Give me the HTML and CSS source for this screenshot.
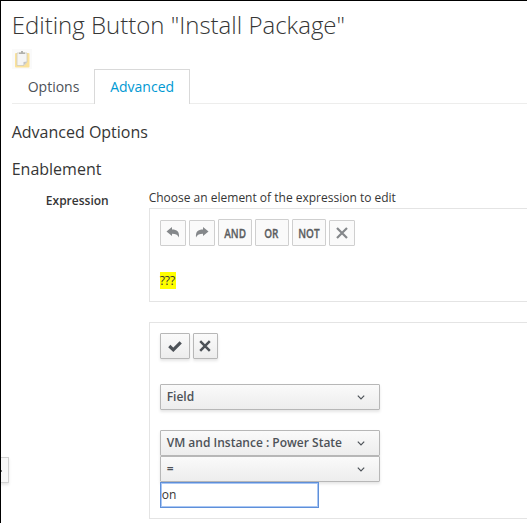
FILE: index.html
```
<!DOCTYPE html>
<html lang="en">
<head>
<meta charset="utf-8">
<title>Editing Button</title>
<link rel="stylesheet" href="styles.css">
</head>
<body>
<main class="page">
  <h1 class="title">Editing Button "Install Package"</h1>
  <div class="clipboard">
    <svg width="20" height="20" viewBox="0 0 20 20">
      <rect width="20" height="20" fill="#fafafa"/>
      <rect x="3" y="4" width="14.500" height="14.500" rx="1" fill="#fbe29a"/>
      <path d="M5 4h10v9l-3 3.500H5z" fill="#f5f5f5" stroke="#cfcbbd" stroke-width=".8"/>
      <path d="M15 12.500l-3.500 4v-3.500z" fill="#c4c4c4"/>
      <path d="M7 5V3.500h2V2h2v1.500h2V5z" fill="#b0b0ac"/>
    </svg>
  </div>
  <nav class="tabs">
    <a class="tab">Options</a>
    <a class="tab active">Advanced</a>
  </nav>
  <h2 class="heading first">Advanced Options</h2>
  <h2 class="heading">Enablement</h2>
  <section class="form-row">
    <div class="label">Expression</div>
    <div class="field">
      <p class="hint">Choose an element of the expression to edit</p>
      <div class="panel expression">
        <div class="toolbar">
          <button class="tool square"><svg width="14" height="12" viewBox="0 0 14 12"><path d="M.5 4.500L6 0v2.500c5 0 7.500 2 7 8C11.800 7.500 9.500 6.700 6 6.700V9z" fill="#85888b"/></svg></button>
          <button class="tool square"><svg width="14" height="12" viewBox="0 0 14 12"><path d="M13.500 4.500L8 0v2.500C3 2.500.5 4.500 1 10.500 2.200 7.500 4.500 6.700 8 6.700V9z" fill="#85888b"/></svg></button>
          <button class="tool"><span>AND</span></button>
          <button class="tool"><span>OR</span></button>
          <button class="tool"><span>NOT</span></button>
          <button class="tool square"><svg width="12" height="12" viewBox="0 0 12 12"><path d="M1 1l10 10M11 1L1 11" stroke="#85888b" stroke-width="2.200"/></svg></button>
        </div>
        <span class="token">???</span>
      </div>
      <div class="panel editor">
        <div class="actions">
          <button class="btn commit"><svg width="14" height="12" viewBox="0 0 14 12"><path d="M1.300 6l4 3.800L12.700 2.300" fill="none" stroke="#4d5258" stroke-width="3.200"/></svg></button>
          <button class="btn discard"><svg width="12" height="12" viewBox="0 0 12 12"><path d="M1.200 1.200l9.600 9.600M10.800 1.200L1.200 10.800" stroke="#4d5258" stroke-width="2.500"/></svg></button>
        </div>
        <button class="btn select kind">Field<svg class="chevron" width="8" height="5" viewBox="0 0 8 5"><path d="M.8.7L4 3.900 7.200.7" fill="none" stroke="#4d5258" stroke-width="1.200"/></svg></button>
        <button class="btn select">VM and Instance : Power State<svg class="chevron" width="8" height="5" viewBox="0 0 8 5"><path d="M.8.7L4 3.900 7.200.7" fill="none" stroke="#4d5258" stroke-width="1.200"/></svg></button>
        <button class="btn select">=<svg class="chevron" width="8" height="5" viewBox="0 0 8 5"><path d="M.8.7L4 3.900 7.200.7" fill="none" stroke="#4d5258" stroke-width="1.200"/></svg></button>
        <input class="value" type="text" value="on">
      </div>
    </div>
  </section>
  <div class="handle"><i></i></div>
</main>
</body>
</html>
```

FILE: styles.css
```
* { box-sizing: border-box; }
body {
  margin: 0;
  background: #fff;
  color: #363636;
  font: 12px/20px "Open Sans", "Noto Sans", sans-serif;
}
.page {
  position: relative;
  height: 523px;
  padding-left: 10.7px;
  overflow: hidden;
  border-top: 1px solid #000;
  border-left: 1px solid #000;
}
h1, h2, p { margin: 0; }
.title {
  padding-top: 10px;
  font-size: 24px;
  line-height: 27px;
  font-weight: 300;
  white-space: nowrap;
}
.clipboard { height: 20px; margin-top: 11px; }
.clipboard svg { display: block; }
.tabs {
  display: flex;
  height: 35px;
  border-bottom: 1px solid #ededec;
}
.tab {
  height: 35px;
  padding: 8px 15px 0 16px;
  font-size: 14px;
  color: #4d5258;
}
.tab.active {
  width: 96px;
  margin-left: -0.7px;
  padding: 7px 0 0 15.5px;
  border: 1px solid #d9d9d9;
  border-bottom: 0;
  background: #fff;
  color: #0099d3;
}
.heading {
  height: 20px;
  margin-top: 17px;
  font-size: 16px;
  line-height: 20px;
  font-weight: 400;
}
.heading.first { margin-top: 18px; }
.form-row { display: flex; margin-top: 9px; }
.label {
  width: 97px;
  margin-right: 40px;
  padding-top: 3px;
  text-align: right;
  font-weight: 600;
}
.field { flex: 1; }
.hint { line-height: 20px; white-space: nowrap; }
.panel {
  border: 1px solid #e4e4e4;
  border-right: 0;
  padding-left: 10px;
}
.expression { height: 94px; padding-top: 10px; }
.toolbar { display: flex; align-items: flex-end; gap: 3px; height: 27px; }
button { padding: 0; font-family: inherit; }
.tool {
  display: flex;
  align-items: center;
  justify-content: center;
  width: 34px;
  height: 27px;
  border: 1px solid #cfcfcf;
  border-radius: 1px;
  background: #fafafa;
  color: #5b5d60;
  font: 600 13px/20px "Open Sans", sans-serif;
}
.tool span { transform: scale(.77, 1); -webkit-text-stroke: .3px #5b5d60; }
.tool.square { width: 26px; height: 26px; }
.token {
  display: block;
  width: 16px;
  height: 17px;
  margin-top: 26px;
  background: #ff0;
  line-height: 17px;
}
.editor { height: 197px; margin-top: 20px; padding-top: 10px; }
.actions { display: flex; gap: 3px; height: 26px; margin-bottom: 25px; }
.btn {
  display: flex;
  align-items: center;
  justify-content: center;
  height: 26px;
  border: 1px solid #b7b7b7;
  border-radius: 1px;
  background: linear-gradient(#fafafa, #ededed);
  box-shadow: 0 2px 3px rgba(3, 3, 3, .1);
  color: #4d5258;
  font-size: 12px;
  font-weight: 600;
  line-height: 20px;
}
.commit { width: 30px; }
.discard { width: 25px; }
.commit svg, .discard svg { margin-bottom: 1px; }
.select {
  width: 220px;
  padding: 0 14px 1px 6px;
  justify-content: space-between;
}
.kind { margin-bottom: 20px; }
.chevron { margin-top: 2px; }
.value {
  display: block;
  width: 159px;
  height: 26px;
  margin: 0;
  padding: 0 1px 1px;
  border: 1px solid #5f8fd8;
  outline: 1px solid #a9c7f5;
  outline-offset: -2px;
  background: #fff;
  color: #363636;
  font: 12px "Open Sans", sans-serif;
}
.handle {
  position: absolute;
  left: -1px;
  top: 456px;
  width: 9px;
  height: 26px;
  border: 1px solid #d1d1d1;
  border-left: 0;
  background: #f8f8f8;
  box-shadow: 0 2px 3px rgba(3, 3, 3, .1);
}
.handle i {
  display: block;
  width: 2px;
  height: 2px;
  margin-top: 12px;
  background: #777;
}
```
